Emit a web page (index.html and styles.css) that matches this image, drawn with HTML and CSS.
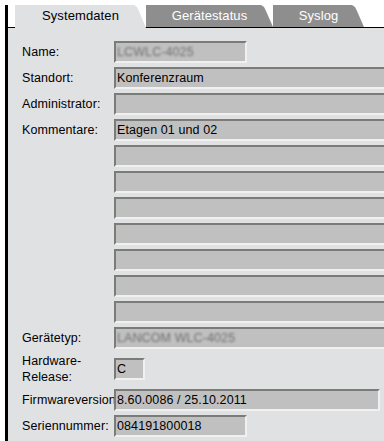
FILE: index.html
```html
<!DOCTYPE html>
<html lang="de">
<head>
    <meta charset="UTF-8">
    <meta name="viewport" content="width=device-width, initial-scale=1.0">
    <title>Systemdaten</title>
    <link rel="stylesheet" href="styles.css">
</head>
<body>
    <div class="frame">
        <div class="tabs">
            <div class="tab active tab-system">Systemdaten</div>
            <div class="tab tab-status">Gerätestatus</div>
            <div class="tab tab-syslog">Syslog</div>
        </div>

        <div class="panel">
            <div class="row">
                <label>Name:</label>
                <div class="field short"><span class="blurred">LCWLC-4025</span></div>
            </div>
            <div class="row">
                <label>Standort:</label>
                <div class="field wide">Konferenzraum</div>
            </div>
            <div class="row">
                <label>Administrator:</label>
                <div class="field wide"></div>
            </div>
            <div class="row">
                <label>Kommentare:</label>
                <div class="field wide">Etagen 01 und 02</div>
            </div>
            <div class="row"><label></label><div class="field wide"></div></div>
            <div class="row"><label></label><div class="field wide"></div></div>
            <div class="row"><label></label><div class="field wide"></div></div>
            <div class="row"><label></label><div class="field wide"></div></div>
            <div class="row"><label></label><div class="field wide"></div></div>
            <div class="row"><label></label><div class="field wide"></div></div>
            <div class="row"><label></label><div class="field wide"></div></div>
            <div class="row">
                <label>Gerätetyp:</label>
                <div class="field wide"><span class="blurred">LANCOM WLC-4025</span></div>
            </div>
            <div class="row tall">
                <label class="two-line">Hardware-<br>Release:</label>
                <div class="field tiny">C</div>
            </div>
            <div class="row">
                <label>Firmwareversion</label>
                <div class="field medium">8.60.0086 / 25.10.2011</div>
            </div>
            <div class="row">
                <label>Seriennummer:</label>
                <div class="field short">084191800018</div>
            </div>
        </div>
    </div>
</body>
</html>
```

FILE: styles.css
```css
body {
    margin: 0;
    background-color: #fff;
    font-family: 'Liberation Sans', Arial, sans-serif;
    color: #000;
    overflow: hidden;
}
.frame {
    margin: 5px 0 0 5px;
    border-left: 3px solid #000;
}
.tabs {
    display: flex;
    align-items: flex-start;
    height: 22px;
    padding-left: 7px;
    border-bottom: 1px solid #000;
}
.tab {
    height: 22px;
    line-height: 21px;
    font-size: 13px;
    letter-spacing: 0.1px;
    text-align: center;
    color: #fff;
    background-color: #8e8e8e;
    clip-path: polygon(0 0, calc(100% - 12px) 0, calc(100% - 9px) 2px, calc(100% - 7px) 6px, 100% 100%, 0 100%);
}
.tab.active {
    height: 23px;
    color: #000;
    background-color: #e0e1e3;
}
.tab-system {
    width: 131px;
}
.tab-status {
    width: 127px;
}
.tab-syslog {
    width: 91px;
}
.panel {
    background-color: #e0e1e3;
    min-height: 420px;
    padding: 13px 0 0 14px;
    display: flex;
    flex-direction: column;
    gap: 4px;
    font-size: 12.5px;
    letter-spacing: 0.1px;
}
.row {
    display: flex;
    align-items: center;
    height: 22px;
}
.row.tall {
    height: 32px;
}
.row label {
    width: 92px;
    flex-shrink: 0;
    white-space: nowrap;
}
.row label.two-line {
    line-height: 16px;
}
.field {
    box-sizing: border-box;
    height: 22px;
    flex-shrink: 0;
    padding-left: 1px;
    line-height: 18px;
    white-space: nowrap;
    overflow: hidden;
    background-color: #c0c0c0;
    border: 2px solid;
    border-color: #7b7b77 #f0f0f0 #f0f0f0 #7b7b77;
}
.field.wide {
    flex: 1;
    border-right: none;
}
.field.short {
    width: 133px;
}
.field.medium {
    width: 266px;
}
.field.tiny {
    width: 31px;
}
.blurred {
    color: #707070;
    filter: blur(0.8px);
}
```
